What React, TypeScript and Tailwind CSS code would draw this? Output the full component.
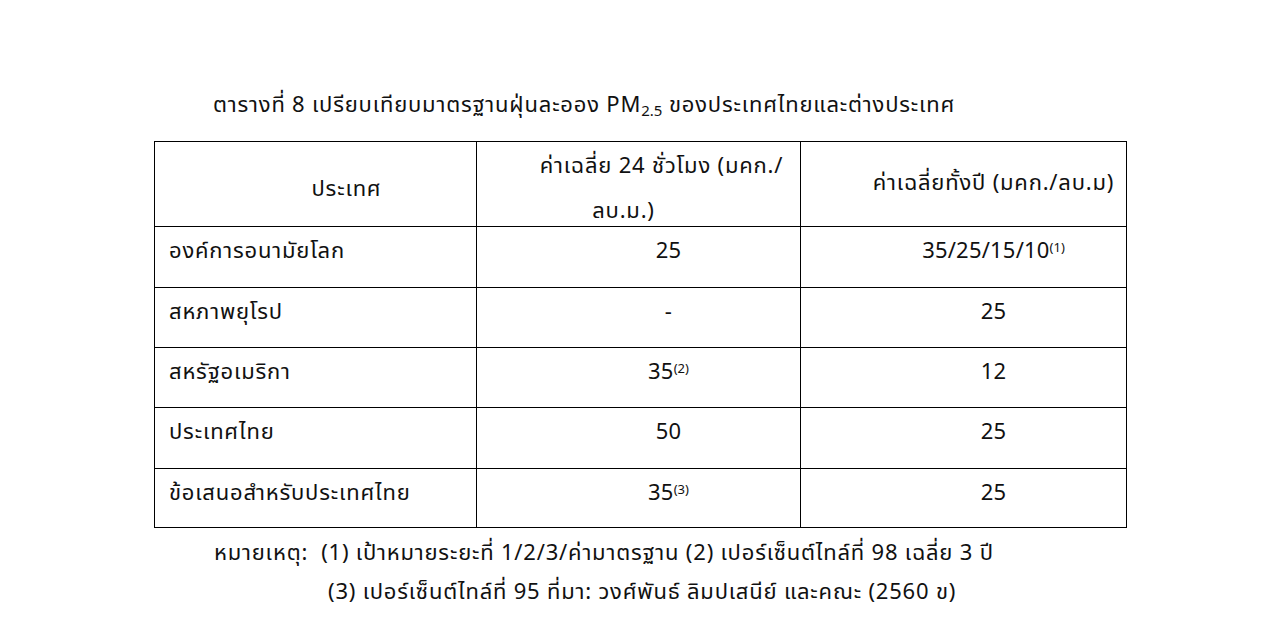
export default function App() {
  const font = { fontFamily: '"Noto Sans", "Noto Sans Thai", "Noto Sans Thai UI", sans-serif' };
  const rows: { name: string; day: string; daySup?: string; year: string; yearSup?: string; h: string }[] = [
    { name: "องค์การอนามัยโลก", day: "25", year: "35/25/15/10", yearSup: "(1)", h: "h-[61px]" },
    { name: "สหภาพยุโรป", day: "-", year: "25", h: "h-[60px]" },
    { name: "สหรัฐอเมริกา", day: "35", daySup: "(2)", year: "12", h: "h-[60px]" },
    { name: "ประเทศไทย", day: "50", year: "25", h: "h-[61px]" },
    { name: "ข้อเสนอสำหรับประเทศไทย", day: "35", daySup: "(3)", year: "25", h: "h-[59px]" },
  ];

  return (
    <div className="min-h-[628px] w-full bg-white text-[#111] text-[22px] tracking-[0.8px]" style={font}>
      <div className="mx-auto w-[972px] pt-[88px]">
        {/* caption */}
        <p className="pl-[59px] leading-[30px] whitespace-nowrap">
          ตารางที่ 8 เปรียบเทียบมาตรฐานฝุ่นละออง PM<sub className="text-[15px] tracking-normal">2.5</sub> ของประเทศไทยและต่างประเทศ
        </p>

        <table className="mt-[23px] w-[972px] border-collapse table-fixed">
          <colgroup>
            <col className="w-[322px]" />
            <col className="w-[324px]" />
            <col className="w-[326px]" />
          </colgroup>
          <thead>
            <tr className="h-[85px]">
              <th className="border border-black font-normal text-center leading-[30px] pt-[6px] pl-[62px]">ประเทศ</th>
              <th className="border border-black font-normal align-top leading-[30px] pt-[7px]">
                <div className="pl-[46px] text-center whitespace-nowrap">ค่าเฉลี่ย 24 ชั่วโมง (มคก./</div>
                <div className="pr-[30px] text-center mt-[15px]">ลบ.ม.)</div>
              </th>
              <th className="border border-black font-normal text-center leading-[30px] pl-[60px] pb-[6px] whitespace-nowrap">
                ค่าเฉลี่ยทั้งปี (มคก./ลบ.ม)
              </th>
            </tr>
          </thead>
          <tbody>
            {rows.map((r) => (
              <tr key={r.name} className={r.h}>
                <td className="border border-black align-top leading-[30px] pt-[7px] pl-[14px]">{r.name}</td>
                <td className="border border-black align-top leading-[30px] pt-[7px] pl-[60px] text-center tracking-[0.2px]">
                  {r.day}
                  {r.daySup && <sup className="text-[13px] tracking-normal">{r.daySup}</sup>}
                </td>
                <td className="border border-black align-top leading-[30px] pt-[7px] pl-[60px] text-center tracking-[0.2px]">
                  {r.year}
                  {r.yearSup && <sup className="text-[13px] tracking-normal">{r.yearSup}</sup>}
                </td>
              </tr>
            ))}
          </tbody>
        </table>

        {/* notes */}
        <div className="mt-[4px] leading-[39px] whitespace-nowrap">
          <p className="pl-[60px]">หมายเหตุ:&nbsp; (1) เป้าหมายระยะที่ 1/2/3/ค่ามาตรฐาน (2) เปอร์เซ็นต์ไทล์ที่ 98 เฉลี่ย 3 ปี</p>
          <p className="pl-[174px]">(3) เปอร์เซ็นต์ไทล์ที่ 95 ที่มา: วงศ์พันธ์ ลิมปเสนีย์ และคณะ (2560 ข)</p>
        </div>
      </div>
    </div>
  );
}
